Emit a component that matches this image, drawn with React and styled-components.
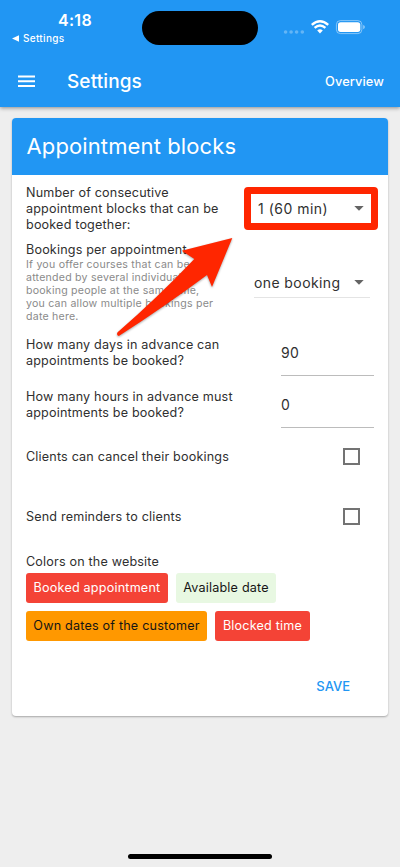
import React from "react";
import styled, { createGlobalStyle } from "styled-components";

const Global = createGlobalStyle`
  * { box-sizing: border-box; }
  body { margin: 0; background: #eee; font-family: Inter, "Liberation Sans", sans-serif; }
`;

const Screen = styled.div`
  position: relative;
  display: flex;
  flex-direction: column;
  width: 400px;
  height: 867px;
  overflow: hidden;
  background: #eee;
  color: #303030;
`;
const Header = styled.header`
  height: 107px;
  flex: none;
  background: #2196f3;
  color: #fff;
  box-shadow: 0 1px 4px rgba(0, 0, 0, 0.42);
`;
const StatusBar = styled.div`
  height: 54px;
  display: grid;
  grid-template-columns: 142px 116px 1fr;
  align-items: start;
`;
const ClockArea = styled.div`
  padding: 10px 0 0 12px;
`;
const Clock = styled.div`
  padding-left: 46px;
  font-size: 16px;
  line-height: 20px;
  font-weight: 600;
  letter-spacing: 0.3px;
`;
const Back = styled.div`
  display: flex;
  align-items: center;
  gap: 4px;
  margin-top: 1px;
  font-size: 10px;
  line-height: 14px;
  font-weight: 500;
  letter-spacing: 0.3px;
`;
const Island = styled.div`
  height: 34px;
  margin-top: 11px;
  border-radius: 17px;
  background: #000;
`;
const StatusIcons = styled.svg`
  display: block;
  margin: 18px 0 0 25px;
`;
const Toolbar = styled.div`
  height: 53px;
  display: flex;
  align-items: center;
  padding: 1px 16px 0 18px;
`;
const PageTitle = styled.h1`
  flex: 1;
  margin: 0 0 0 32px;
  font-size: 19px;
  font-weight: 500;
  letter-spacing: 0.1px;
`;
const NavAction = styled.span`
  font-size: 12.8px;
  font-weight: 500;
  letter-spacing: 0.1px;
`;
const Card = styled.main`
  width: 376px;
  height: 598px;
  margin: 11px 0 0 12px;
  flex: none;
  border-radius: 4px;
  overflow: hidden;
  background: #fff;
  box-shadow: 0 1px 2px rgba(0, 0, 0, 0.3);
`;
const CardHeader = styled.h2`
  height: 57px;
  margin: 0;
  padding-left: 14.5px;
  background: #2196f3;
  color: #fff;
  font-size: 22px;
  line-height: 57px;
  font-weight: 400;
  letter-spacing: 0.12px;
`;
const Form = styled.div`
  padding: 10px 14px 0 14px;
`;
const Row = styled.div`
  display: flex;
  justify-content: space-between;
  height: ${(p) => p.$height}px;
`;
const Label = styled.div`
  font-size: 12.6px;
  line-height: 15.8px;
  letter-spacing: 0.17px;
  white-space: nowrap;
`;
const Hint = styled.div`
  color: #8a8a8a;
  font-size: 10.6px;
  line-height: 13px;
  letter-spacing: 0.22px;
  white-space: nowrap;
`;
const Select = styled.div`
  display: flex;
  align-items: center;
  justify-content: space-between;
  width: ${(p) => (p.$marked ? 134 : 116)}px;
  height: ${(p) => (p.$marked ? 43 : 29)}px;
  margin: ${(p) => (p.$marked ? "2px -4px 0 0" : "27px 4px 0 0")};
  padding: ${(p) => (p.$marked ? "0 7px 0 7px" : "0 6px 2px 0")};
  border: ${(p) => (p.$marked ? "7px solid #ff2600" : "0 solid transparent")};
  border-bottom: ${(p) => (p.$marked ? "7px solid #ff2600" : "1px solid #e4e4e4")};
  border-radius: ${(p) => (p.$marked ? 4 : 0)}px;
  font-size: 14px;
  letter-spacing: ${(p) => (p.$marked ? 0.5 : 0.4)}px;
  white-space: nowrap;
`;
const NumberField = styled.div`
  width: 93px;
  height: 38.5px;
  border-bottom: 1px solid #bcbcbc;
  font-size: 14px;
  line-height: 32px;
  letter-spacing: 0.2px;
`;
const Checkbox = styled.div`
  width: 17px;
  height: 17px;
  margin: -1px 14px 0 0;
  border: 2px solid #737373;
`;
const Chips = styled.div`
  display: flex;
  flex-wrap: wrap;
  gap: 8px;
  margin-top: 4px;
`;
const Chip = styled.div`
  width: ${(p) => p.$width}px;
  height: 30px;
  border-radius: 3px;
  background: ${(p) => p.$bg};
  color: ${(p) => p.$color};
  font-size: 12.6px;
  line-height: 30px;
  letter-spacing: 0.2px;
  text-align: center;
  white-space: nowrap;
`;
const Save = styled.div`
  margin: 37px 24px 0 0;
  text-align: right;
  color: #2196f3;
  font-size: 13px;
  line-height: 16px;
  font-weight: 500;
`;
const PointerArrow = styled.svg`
  position: absolute;
  left: 110px;
  top: 230px;
  filter: drop-shadow(0 1px 1px rgba(0, 0, 0, 0.35));
`;
const HomeIndicator = styled.div`
  position: absolute;
  left: 128px;
  bottom: 8px;
  width: 144px;
  height: 5px;
  border-radius: 3px;
  background: #000;
`;

const Caret = () => (
  <svg width="10" height="5" viewBox="0 0 10 5">
    <path d="M.3 0h9.4L5 4.8z" fill="#646464" />
  </svg>
);

export default function App() {
  return (
    <>
      <Global />
      <Screen>
        <Header>
          <StatusBar>
            <ClockArea>
              <Clock>4:18</Clock>
              <Back>
                <svg width="7" height="7" viewBox="0 0 7 7">
                  <path d="M0 3.5 7 .3v6.4z" fill="#fff" />
                </svg>
                Settings
              </Back>
            </ClockArea>
            <Island />
            <StatusIcons width="90" height="18" viewBox="0 0 90 18">
              <g fill="#fff" opacity=".3">
                <circle cx="2.6" cy="14" r="1.8" />
                <circle cx="8.1" cy="14" r="1.8" />
                <circle cx="13.6" cy="14" r="1.8" />
                <circle cx="19.3" cy="14" r="1.8" />
              </g>
              <g fill="none" stroke="#fff" strokeWidth="2.4">
                <path d="M28.8 6.9Q37-.4 45.2 6.9" />
                <path d="M31.6 9.9Q37 5.2 42.4 9.9" />
              </g>
              <path d="M34.2 12.4Q37 10.2 39.8 12.4L37 15.4z" fill="#fff" />
              <rect x="53.4" y="2.6" width="25.5" height="13" rx="4" fill="none" stroke="#fff" opacity=".45" />
              <rect x="55" y="4.3" width="22.3" height="9.6" rx="2.6" fill="#fff" />
              <path d="M80.2 7q1.7.6 1.7 2.1t-1.7 2.1z" fill="#fff" opacity=".5" />
            </StatusIcons>
          </StatusBar>
          <Toolbar>
            <svg width="17" height="13" viewBox="0 0 17 13">
              <path d="M0 1.5h17M0 6.3h17M0 11h17" stroke="#fff" strokeWidth="2" />
            </svg>
            <PageTitle>Settings</PageTitle>
            <NavAction>Overview</NavAction>
          </Toolbar>
        </Header>
        <Card>
          <CardHeader>Appointment blocks</CardHeader>
          <Form>
            <Row $height={57}>
              <Label>
                Number of consecutive<br />appointment blocks that can be<br />booked together:
              </Label>
              <Select $marked>1 (60 min)<Caret /></Select>
            </Row>
            <Row $height={95}>
              <div>
                <Label>Bookings per appointment</Label>
                <Hint>
                  If you offer courses that can be<br />attended by several individual<br />booking people at the same time,<br />you can allow multiple bookings per<br />date here.
                </Hint>
              </div>
              <Select>one booking<Caret /></Select>
            </Row>
            <Row $height={52}>
              <Label>How many days in advance can<br />appointments be booked?</Label>
              <NumberField>90</NumberField>
            </Row>
            <Row $height={60}>
              <Label>How many hours in advance must<br />appointments be booked?</Label>
              <NumberField>0</NumberField>
            </Row>
            <Row $height={59.5}>
              <Label>Clients can cancel their bookings</Label>
              <Checkbox />
            </Row>
            <Row $height={45}>
              <Label>Send reminders to clients</Label>
              <Checkbox />
            </Row>
            <Label>Colors on the website</Label>
            <Chips>
              <Chip $width={142} $bg="#f44336" $color="#fff">Booked appointment</Chip>
              <Chip $width={100} $bg="#e8f8e2" $color="#151515">Available date</Chip>
              <Chip $width={181} $bg="#ff9800" $color="#151515">Own dates of the customer</Chip>
              <Chip $width={95} $bg="#f44336" $color="#fff">Blocked time</Chip>
            </Chips>
            <Save>SAVE</Save>
          </Form>
        </Card>
        <PointerArrow width="130" height="115" viewBox="110 230 130 115">
          <path
            d="M232.3 238 181.7 250.7 194.3 259Q156 299 117.6 332.3Q116 335 118.8 336.1Q164 307 207 275L212 287z"
            fill="#ff2600"
          />
        </PointerArrow>
        <HomeIndicator />
      </Screen>
    </>
  );
}
